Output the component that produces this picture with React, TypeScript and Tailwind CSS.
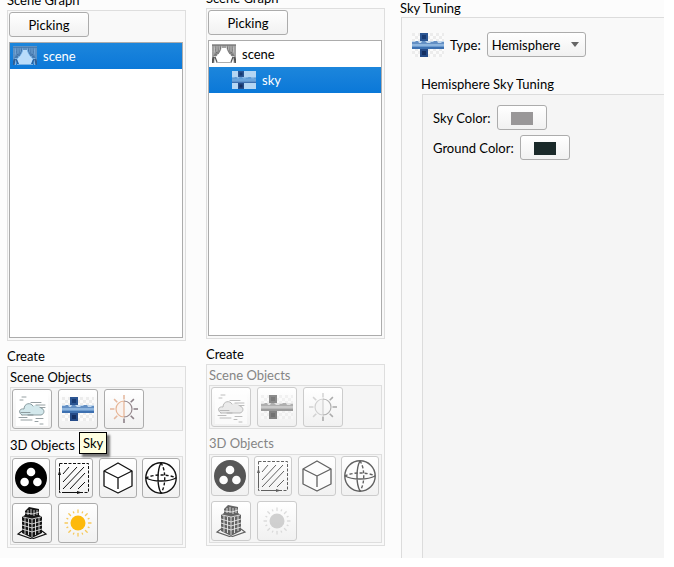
import type { ReactNode } from 'react';

const RAISED =
  'flex items-center justify-center rounded-[3px] border border-[#acacac] bg-gradient-to-b from-white to-[#f1f1f1]';

function CurtainIcon({ selected = false }: { selected?: boolean }) {
  const ink = selected ? '#2d5f96' : '#555555';
  const cloth = selected ? '#7fb2e2' : '#d4d4d4';
  return (
    <svg width="24" height="20" viewBox="0 0 24 20" fill="none" stroke={ink} strokeWidth="0.8">
      <path d="M0 0H24V19H21L20 13C17 10 15 8 14 4L12 5L10 4C9 8 7 10 4 13L3 19H0Z" fill={cloth} stroke="none" />
      <path
        d="M12 4L10 4C9 8 7 10 4 13L6 18H18L20 13C17 10 15 8 14 4Z"
        fill={selected ? '#b9dcfa' : '#ffffff'}
        stroke="none"
      />
      <path d="M0 1H24M1 1Q1 8 1 13M3 1Q4 9 2 12M5 1Q6 8 3 12M7 1Q8 6 4 12M9 1Q9 6 6 10M11 1V4M13 1V4M15 1Q15 6 18 10M17 1Q16 6 20 12M19 1Q18 8 21 12M21 1Q20 9 22 12M23 1V13" />
      <path d="M1 13L0 19M2 13L1 19M3 13L5 18M21 13L19 18M22 13L23 19M23 13L24 19" strokeWidth="1.2" />
      <path d="M4 18.5H20" stroke={selected ? '#92bfe9' : '#999999'} />
    </svg>
  );
}

function SkyMapIcon({ small = false, selected = false }: { small?: boolean; selected?: boolean }) {
  const cells = [];
  for (let row = 0; row < 8; row++) {
    for (let col = 0; col < 11; col++) {
      if ((row + col) % 2 === 0) {
        cells.push(<rect key={`${row}-${col}`} x={col * 3} y={row * 3} width="3" height="3" fill="#ececec" />);
      }
    }
  }
  return (
    <svg width={small ? 24 : 32} height={small ? 18 : 24} viewBox="0 0 32 24">
      <rect width="32" height="24" fill={selected ? '#b5d6f3' : '#fbfbfb'} />
      {!selected && cells}
      <rect x="8" width="8" height="8" fill="#2b5592" />
      <rect x="10" y="2" width="4" height="4" fill="#173a72" />
      <rect y="8" width="32" height="3" fill={selected ? '#8dbbe6' : '#c3d8ed'} />
      <path d="M0 9H3L4 8H6L7 10H9L10 8H13L15 10H18L19 9H21L22 8H25L26 10H29L30 9H32V12H0Z" fill={selected ? '#5f9cd6' : '#638fc4'} />
      <rect y="11" width="32" height="3" fill={selected ? '#5596d6' : '#6b9bd0'} />
      <path d="M0 12H32" stroke={selected ? '#8ebbe6' : '#b4d0ec'} />
      <rect y="14" width="32" height="2" fill="#3d70b0" />
      <rect x="8" y="16" width="8" height="8" fill="#254b88" />
      <rect x="10" y="18" width="4" height="4" fill="#142f62" />
    </svg>
  );
}

function CloudIcon() {
  return (
    <svg width="32" height="34" viewBox="0 0 32 34" fill="none" strokeWidth="0.8" strokeLinecap="round">
      <rect width="32" height="34" fill="#ffffff" />
      <path d="M8 23C2 23 3 16 8 17C8 11 15 10 17 14C20 12 24 13 25 16C29 16 29 22 25 23Z" fill="#d3e8ec" />
      <path d="M6 23C2 21 3 16 8 17C8 11 15 10 17 14M25 16C29 17 29 22 25 23H12" stroke="#74878b" />
      <path d="M6 5H10M4 8H7M15 10.5H25M20 13H29M24 15.5H29M5 20.5H14M6 23H17M3 25.5H11M5 28H16M20 26.5H27M19 29.5H22M24 32H27" stroke="#7c888b" />
    </svg>
  );
}

function HalfSunIcon() {
  const spokes = [0, 45, 90, 135, 180, 225, 270, 315];
  return (
    <svg width="32" height="32" viewBox="0 0 32 32" fill="none" strokeWidth="1.6">
      <path d="M16 8A8 8 0 0 0 16 24Z" fill="#faf3ef" stroke="#e6b494" strokeWidth="1.2" />
      <path d="M16 8A8 8 0 0 1 16 24" stroke="#95878c" strokeWidth="1.2" />
      {spokes.map((angle) => (
        <path
          key={angle}
          d="M16 2V6.5"
          transform={`rotate(${angle} 16 16)`}
          stroke={angle > 180 || angle === 0 ? '#e5b9a0' : '#8d8188'}
        />
      ))}
    </svg>
  );
}

function SpheresIcon() {
  return (
    <svg width="32" height="32" viewBox="0 0 32 32">
      <circle cx="16" cy="16" r="16" fill="#000000" />
      <g fill="#ffffff">
        <circle cx="16" cy="10" r="4.3" />
        <circle cx="9.6" cy="20" r="4.3" />
        <circle cx="22.4" cy="20" r="4.3" />
      </g>
    </svg>
  );
}

function PlaneIcon() {
  return (
    <svg width="32" height="32" viewBox="0 0 32 32" fill="none" stroke="#111111" strokeWidth="1">
      <path d="M1.5 1.5H30.5V30.5M1.5 1.5V30.5H30.5" strokeDasharray="3 1.5" />
      <path d="M1.5 12V28M4 30.5H20" />
      <path d="M1.5 8L0 13H3ZM24 30.5L19 29V32Z" fill="#111111" stroke="none" />
      <path d="M5 12L11 5M5 20L19 5M5 27L26 5M12 27L27 11M20 27L27 20" />
    </svg>
  );
}

function CubeIcon() {
  return (
    <svg width="32" height="32" viewBox="0 0 32 32" stroke="#111111" strokeWidth="1.3" strokeLinejoin="round">
      <path d="M16 1L30 9V24L16 31L2 24V9Z" fill="#ffffff" />
      <path d="M2 9L16 16L30 9M16 16V27" fill="none" />
    </svg>
  );
}

function SphereIcon() {
  return (
    <svg width="32" height="32" viewBox="0 0 32 32" fill="none" stroke="#111111" strokeWidth="1.4">
      <circle cx="16" cy="16" r="15.2" fill="#ffffff" />
      <path d="M16 1C12 8 12 24 16 31M1 16C8 20 24 20 31 16" />
      <path d="M16 1C21 8 21 24 16 31M1 16C8 12 24 12 31 16" strokeDasharray="3 2" />
    </svg>
  );
}

function BuildingIcon() {
  return (
    <svg width="32" height="32" viewBox="0 0 32 32">
      <path d="M6 24L2 27L16 32L30 27L26 24" fill="none" stroke="#111111" strokeWidth="1.2" />
      <path d="M9 4L13 0L23 2V8L26 10V26L16 31L6 26V10L9 8Z" fill="#151515" />
      <g stroke="#f5f5f5" strokeWidth="0.8" fill="none">
        <path d="M9 11V27M12.5 12V28M16 12V30M19.5 12V28M23 11V26M12 3V8M15 2V8M18 3V9M21 3V8" />
        <path d="M6 14L16 17L26 14M6 18L16 21L26 18M6 22L16 25L26 22M9 6L17 7L23 5" />
        <path d="M7 10L16 12L25 10" />
      </g>
    </svg>
  );
}

function SunIcon() {
  return (
    <svg width="32" height="32" viewBox="0 0 32 32" stroke="#f6c95b" strokeWidth="1.3" strokeLinecap="round">
      <circle cx="16" cy="16" r="7.5" fill="#fdb90b" stroke="none" />
      {Array.from({ length: 16 }, (_, i) => (
        <path key={i} d={i % 2 ? 'M16 4V5' : 'M16 3V5.5'} transform={`rotate(${i * 22.5} 16 16)`} />
      ))}
    </svg>
  );
}

type ToolProps = { label: string; children: ReactNode; disabled?: boolean; narrow?: boolean };

function ToolButton({ label, children, disabled, narrow }: ToolProps) {
  return (
    <button
      type="button"
      aria-label={label}
      disabled={disabled}
      className={`${RAISED} h-10 disabled:border-[#cccccc] ${narrow ? 'w-[38px]' : 'w-10'}`}
    >
      <span className={disabled ? 'opacity-65 grayscale' : ''}>{children}</span>
    </button>
  );
}

function CreatePanel({ disabled = false }: { disabled?: boolean }) {
  const caption = disabled ? 'text-[#858585]' : '';
  return (
    <section>
      <h2 className="pt-[5px]">Create</h2>
      <div className="border border-[#dedede] bg-[#f9f9f9] px-0.5 pb-0.5">
        <h3 className={caption}>Scene Objects</h3>
        <div className="flex gap-1.5 border border-[#dedede] bg-[#f5f5f5] p-px">
          <ToolButton label="Atmosphere" disabled={disabled}><CloudIcon /></ToolButton>
          <div className="relative">
            <ToolButton label="Sky" disabled={disabled}><SkyMapIcon /></ToolButton>
            {!disabled && (
              <div
                role="tooltip"
                className="absolute top-[43px] left-[21px] z-10 border border-black bg-[#ffffe1] px-[3px] shadow-[3px_3px_2px_#777777]"
              >
                Sky
              </div>
            )}
          </div>
          <ToolButton label="Light" disabled={disabled}><HalfSunIcon /></ToolButton>
        </div>
        <h3 className={`pt-1 pb-px ${caption}`}>3D Objects</h3>
        <div className="flex flex-col gap-[5px] border border-[#dedede] bg-[#f5f5f5] p-px">
          <div className="flex justify-between pr-px">
            <ToolButton label="Model" narrow disabled={disabled}><SpheresIcon /></ToolButton>
            <ToolButton label="Plane" narrow disabled={disabled}><PlaneIcon /></ToolButton>
            <ToolButton label="Box" narrow disabled={disabled}><CubeIcon /></ToolButton>
            <ToolButton label="Sphere" narrow disabled={disabled}><SphereIcon /></ToolButton>
          </div>
          <div className="flex gap-1.5">
            <ToolButton label="Building" disabled={disabled}><BuildingIcon /></ToolButton>
            <ToolButton label="Sun" disabled={disabled}><SunIcon /></ToolButton>
          </div>
        </div>
      </div>
    </section>
  );
}

function SceneGraph({ children }: { children: ReactNode }) {
  return (
    <section>
      <h2>Scene Graph</h2>
      <div className="border border-[#dedede] bg-[#f9f9f9] pt-px pr-0.5 pb-0.5 pl-px">
        <button type="button" className={`${RAISED} h-[25px] w-20`}>Picking</button>
        <ul className="mt-[5px] h-[296px] border border-[#acacac] bg-white">{children}</ul>
      </div>
    </section>
  );
}

const SELECTED = 'bg-gradient-to-b from-[#1c86dc] to-[#0a78d8] text-white';

function ColorButton({ id, swatch }: { id: string; swatch: string }) {
  return (
    <button id={id} type="button" className={`${RAISED} h-[25px] w-[50px]`}>
      <span className={`mt-px h-[13px] w-[22px] ${swatch}`} />
    </button>
  );
}

export default function App() {
  return (
    <div className="overflow-hidden pr-2.5 font-[Lato,sans-serif] text-[13px] leading-5 text-black">
      <main className="flex bg-[#fcfcfc] pl-[7px]">
        <div className="-mt-2.5 w-[179px] shrink-0 pb-2.5">
          <SceneGraph>
            <li className={`flex h-[26px] items-center gap-1.5 pl-[3px] ${SELECTED}`}>
              <CurtainIcon selected />
              scene
            </li>
          </SceneGraph>
          <CreatePanel />
        </div>
        <div className="-mt-3 ml-5 w-[179px] shrink-0 pb-2.5">
          <SceneGraph>
            <li className="flex h-[26px] items-center gap-1.5 pl-[3px]">
              <CurtainIcon />
              scene
            </li>
            <li className={`flex h-[26px] items-center gap-1.5 pl-[23px] ${SELECTED}`}>
              <SkyMapIcon small selected />
              sky
            </li>
          </SceneGraph>
          <CreatePanel disabled />
        </div>
        <section className="ml-[15px] flex min-w-0 grow flex-col">
          <h2 className="pb-px leading-4">Sky Tuning</h2>
          <div className="ml-px flex grow flex-col border-t border-l border-[#dcdcdc] bg-[#f9f9f9] pt-3.5 pl-2.5">
            <div className="flex items-center">
              <SkyMapIcon />
              <label htmlFor="sky-type" className="ml-1.5">Type:</label>
              <div className="relative ml-1.5">
                <select
                  id="sky-type"
                  className="block h-[25px] w-[99px] appearance-none rounded-[3px] border border-[#acacac] bg-gradient-to-b from-white to-[#f1f1f1] pl-1"
                >
                  <option>Hemisphere</option>
                </select>
                <svg className="pointer-events-none absolute top-2.5 right-[7px]" width="8" height="5" viewBox="0 0 8 5">
                  <path d="M0 0H8L4 5Z" fill="#666666" />
                </svg>
              </div>
            </div>
            <h3 className="mt-[17px] pl-[9px]">Hemisphere Sky Tuning</h3>
            <div className="ml-2.5 flex grow flex-col gap-[5px] border-t border-l border-[#dcdcdc] bg-[#f5f5f5] pt-2.5 pl-2.5">
              <div className="flex items-center gap-1.5">
                <label htmlFor="sky-color">Sky Color:</label>
                <ColorButton id="sky-color" swatch="bg-[#999798]" />
              </div>
              <div className="flex items-center gap-1.5">
                <label htmlFor="ground-color">Ground Color:</label>
                <ColorButton id="ground-color" swatch="bg-[#1a2929]" />
              </div>
            </div>
          </div>
        </section>
      </main>
    </div>
  );
}
